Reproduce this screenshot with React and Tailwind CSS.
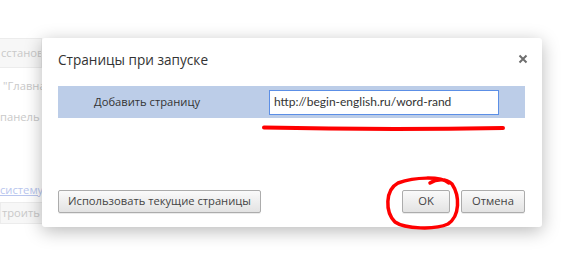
import React from 'react';

const font = { fontFamily: '"Open Sans", "Noto Sans", sans-serif' };

function Btn({ children, className = '' }) {
    return (
        <button
            className={`h-[23px] rounded-[2px] border border-[#acacac] bg-gradient-to-b from-[#fafafa] to-[#e3e3e3] text-[11.2px] text-[#444] shadow-[0_1px_0_rgba(0,0,0,0.08)] whitespace-nowrap ${className}`}
        >
            {children}
        </button>
    );
}

export default function App() {
    return (
        <div className="relative w-[578px] h-[263px] overflow-hidden bg-white" style={font}>
            {/* faded settings page behind the dialog */}
            <div className="flex flex-col pt-[38px] text-[11.2px] text-[#c9c9c9] whitespace-nowrap">
                <div className="h-[30px] w-[60px] -ml-[18px] border border-[#ececec] bg-[#f7f7f7] flex items-center pl-[18px] overflow-hidden">
                    сстанов
                </div>
                <div className="mt-[10px] pl-[3px]">"Главна</div>
                <div className="mt-[14px]">панель з</div>
                <div className="mt-[56px] text-[#b9c6ee] underline">систему п</div>
                <div className="mt-[4px] h-[22px] w-[170px] border border-[#ececec] bg-[#f7f7f7] flex items-center pl-[1px] overflow-hidden">
                    троить
                </div>
            </div>

            {/* dialog */}
            <div className="absolute left-[42px] top-[38px] w-[500px] h-[189px] rounded-[3px] bg-white shadow-[0_4px_18px_rgba(0,0,0,0.28)] flex flex-col pl-[16px] pr-[17px]">
                <div className="flex items-start justify-between pt-[12px]">
                    <div className="text-[13.6px] text-[#333] leading-[20px]">Страницы при запуске</div>
                    <svg width="10" height="10" viewBox="0 0 10 10" className="mt-[4px] -mr-[3px]">
                        <path d="M1.5 1.5 L8.5 8.5 M8.5 1.5 L1.5 8.5" stroke="#6e6e6e" strokeWidth="2" />
                    </svg>
                </div>

                <div className="mt-[16px] h-[32px] bg-[#bccde8] flex items-center">
                    <div className="w-[211px] pl-[36px] text-[11.2px] text-[#333]">Добавить страницу</div>
                    <div
                        className="w-[230px] h-[25px] border border-[#5c8fe6] bg-white flex items-center pl-[4px] text-[12px] text-[#333] whitespace-nowrap"
                        style={{ fontFamily: 'Lato, "Open Sans", sans-serif' }}
                    >
                        http://begin-english.ru/word-rand
                    </div>
                </div>

                <div className="flex-1" />

                <div className="flex items-center pb-[14px]">
                    <Btn className="w-[203px]">Использовать текущие страницы</Btn>
                    <div className="flex-1" />
                    <Btn className="w-[48px]">OK</Btn>
                    <Btn className="w-[64px] ml-[11px]">Отмена</Btn>
                </div>
            </div>

            {/* red annotations */}
            <svg className="absolute left-0 top-0 pointer-events-none" width="578" height="263">
                <path d="M264 127.5 Q380 130 503 128" stroke="#ff0000" strokeWidth="4" fill="none" strokeLinecap="round" />
                <path
                    d="M449 183 C440 176 415 177 398 183 C385 190 385 212 395 222 C405 229 435 230 448 224 C460 216 460 196 452 184 C446 178 436 179 430 183"
                    stroke="#ff0000"
                    strokeWidth="3.5"
                    fill="none"
                    strokeLinecap="round"
                />
            </svg>
        </div>
    );
}
